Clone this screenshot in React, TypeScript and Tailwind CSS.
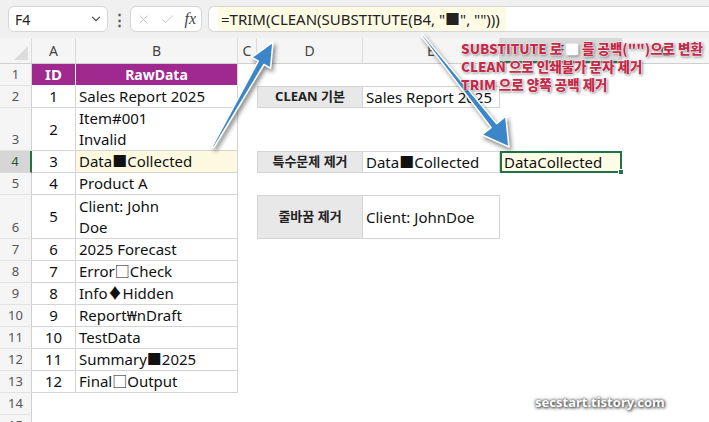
import { ChevronDown, X, Check } from "lucide-react";

type RowData = {
  n: number;
  h: number;
  a?: string;
  b?: string[];
  d?: string;
  e?: string;
  f?: string;
  top?: boolean;
  sel?: boolean;
};

const rows: RowData[] = [
  { n: 1, h: 22, a: "ID", b: ["RawData"], top: true },
  { n: 2, h: 22, a: "1", b: ["Sales Report 2025"], d: "CLEAN 기본", e: "Sales Report 2025" },
  { n: 3, h: 43, a: "2", b: ["Item#001", "Invalid"] },
  { n: 4, h: 22, a: "3", b: ["Data■Collected"], d: "특수문제 제거", e: "Data■Collected", f: "DataCollected", sel: true },
  { n: 5, h: 22, a: "4", b: ["Product A"] },
  { n: 6, h: 44, a: "5", b: ["Client: John", "Doe"], d: "줄바꿈 제거", e: "Client: JohnDoe" },
  { n: 7, h: 22, a: "6", b: ["2025 Forecast"] },
  { n: 8, h: 22, a: "7", b: ["Error□Check"] },
  { n: 9, h: 22, a: "8", b: ["Info♦Hidden"] },
  { n: 10, h: 22, a: "9", b: ["Report₩nDraft"] },
  { n: 11, h: 22, a: "10", b: ["TestData"] },
  { n: 12, h: 22, a: "11", b: ["Summary■2025"] },
  { n: 13, h: 22, a: "12", b: ["Final□Output"] },
  { n: 14, h: 22 },
  { n: 15, h: 22 },
];

const grid = "border-[#d4d4d4]";

const Toolbar = () => (
  <div className="flex h-[38px] items-center bg-[#f0f0f0] pl-2">
    <div className="flex h-[26px] w-[100px] items-center justify-between rounded-md border border-[#d6d6d6] bg-white pl-[6px] pr-[4px] text-[14px] text-[#222]">
      <span>F4</span>
      <ChevronDown className="h-[14px] w-[14px] text-[#555]" strokeWidth={2} />
    </div>
    <div className="flex w-[22px] justify-center text-[15px] font-bold leading-none text-[#555]">⋮</div>
    <div className="flex h-[26px] w-[72px] items-center justify-between rounded-md border border-[#d6d6d6] bg-white px-[5px]">
      <X className="h-[15px] w-[15px] text-[#c4c4c4]" strokeWidth={1.5} />
      <Check className="h-[15px] w-[15px] text-[#c4c4c4]" strokeWidth={1.5} />
      <span className="font-['Liberation_Serif',serif] text-[16px] italic text-[#444]">fx</span>
    </div>
    <div className="ml-[6px] flex h-[26px] flex-1 items-stretch rounded-l-md border border-r-0 border-[#d6d6d6] bg-white pl-[9px]">
      <span className="flex items-center bg-[#fdfbe4] pl-[3px] pr-[6px] text-[15px] text-[#222]">
        =TRIM(CLEAN(SUBSTITUTE(B4, "■", "")))
      </span>
    </div>
  </div>
);

const ColHeader = () => (
  <div className="flex h-[26px] border-b border-[#cfcfcf] bg-[#f5f5f5] text-[14px] text-[#444]">
    <div className="relative w-[32px] border-r border-[#dadada]">
      <svg className="absolute bottom-[3px] right-[3px]" width="14" height="14" viewBox="0 0 14 14">
        <polygon points="14,0 14,14 0,14" fill="#dcdcdc" />
      </svg>
    </div>
    <div className="flex w-[44px] items-center justify-center border-r border-[#dadada]">A</div>
    <div className="flex w-[162px] items-center justify-center border-r border-[#dadada]">B</div>
    <div className="flex w-[19px] items-center justify-center border-r border-[#dadada]">C</div>
    <div className="flex w-[106px] items-center justify-center border-r border-[#dadada]">D</div>
    <div className="flex w-[137px] items-center justify-center border-r border-[#dadada]">E</div>
    <div className="flex w-[122px] items-center justify-center border-b-2 border-r border-b-[#217346] border-r-[#dadada] bg-[#d9d9d9]">F</div>
    <div className="flex flex-1 items-center justify-center">G</div>
  </div>
);

const SheetRow = ({ r }: { r: RowData }) => {
  const inTable = r.n <= 13;
  return (
    <div className="flex" style={{ height: r.h }}>
      <div
        className={`flex w-[32px] items-end justify-center border-b border-r pb-[2px] text-[13px] leading-[18px] ${
          r.sel
            ? "border-b-[#dadada] border-r-2 border-r-[#217346] bg-[#d6d6d6] text-[#1c5a36]"
            : "border-b-[#e2e2e2] border-r-[#cfcfcf] bg-[#f5f5f5] text-[#555]"
        }`}
      >
        {r.n}
      </div>
      {inTable ? (
        <>
          <div
            className={`flex w-[44px] items-center justify-center border-b border-r text-[15px] ${
              r.top ? "border-white bg-[#a0298f] font-bold text-white" : `${grid} text-[#111]`
            }`}
          >
            {r.a}
          </div>
          <div
            className={`flex w-[162px] flex-col border-b border-r ${
              r.top
                ? "items-center justify-center border-b-white border-r-[#d4d4d4] bg-[#a0298f] font-bold text-[14px] text-white"
                : `justify-center ${grid} pl-[3px] text-[15px] leading-[21px] text-[#111] ${r.sel ? "bg-[#fdf9e1]" : ""}`
            }`}
          >
            {r.b?.map((t) => (
              <span key={t}>{t}</span>
            ))}
          </div>
        </>
      ) : (
        <div className="w-[206px]" />
      )}
      <div className="w-[19px]" />
      {r.d ? (
        <>
          <div className={`flex w-[106px] items-center justify-center border ${grid} bg-[#e8e8e8] text-[13px] font-bold text-[#222]`}>
            {r.d}
          </div>
          <div className={`flex w-[137px] items-center border border-l-0 ${grid} pl-[3px] text-[15px] text-[#111]`}>
            {r.e}
          </div>
        </>
      ) : (
        <div className="w-[243px]" />
      )}
      {r.f ? (
        <div className="relative flex w-[122px] items-center border-2 border-[#217346] bg-[#fffde6] pl-[2px] text-[15px] text-[#111]">
          {r.f}
          <div className="absolute -bottom-[4px] -right-[4px] h-[6px] w-[6px] border border-white bg-[#217346]" />
        </div>
      ) : null}
    </div>
  );
};

const Arrows = () => (
  <svg
    className="pointer-events-none absolute left-0 top-0 [filter:drop-shadow(2px_3px_2px_rgba(0,0,0,0.45))]"
    width="709"
    height="422"
    viewBox="0 0 709 422"
  >
    <polygon
      points="212.1,146.5 258.2,61.1 251.6,57.3 273,42 270.6,68.3 264,64.5 213.9,147.5"
      fill="#3a86c8"
      stroke="white"
      strokeWidth="1.6"
      strokeLinejoin="round"
    />
    <polygon
      points="421.2,35.6 491,127.5 481.8,134.8 509,147 505.8,116.2 496.6,123.5 422.8,34.4"
      fill="#3a86c8"
      stroke="white"
      strokeWidth="1.6"
      strokeLinejoin="round"
    />
  </svg>
);

export default function App() {
  return (
    <div className="relative h-[422px] w-[709px] overflow-hidden bg-white font-['Noto_Sans','Noto_Sans_CJK_KR',sans-serif]">
      <Toolbar />
      <ColHeader />
      {rows.map((r) => (
        <SheetRow key={r.n} r={r} />
      ))}
      <Arrows />
      <div className="absolute left-[461px] top-[39px] flex flex-col text-[13.5px] font-extrabold leading-[18px] text-[#c22a4a] [text-shadow:0_0_1px_#fff,0_0_1px_#fff,0_0_2px_#fff,0_0_2px_#fff,1px_1px_3px_rgba(0,0,0,0.7)] font-['Noto_Sans_CJK_KR',sans-serif]">
        <span>
          SUBSTITUTE 로 <span className="text-white">■</span> 를 공백("")으로 변환
        </span>
        <span>CLEAN 으로 인쇄불가 문자 제거</span>
        <span>TRIM 으로 양쪽 공백 제거</span>
      </div>
      <div className="absolute left-[535px] top-[393px] text-[13px] font-bold text-white [text-shadow:0_0_2px_#555,1px_1px_3px_#444,0_0_4px_#777]">
        secstart.tistory.com
      </div>
    </div>
  );
}
